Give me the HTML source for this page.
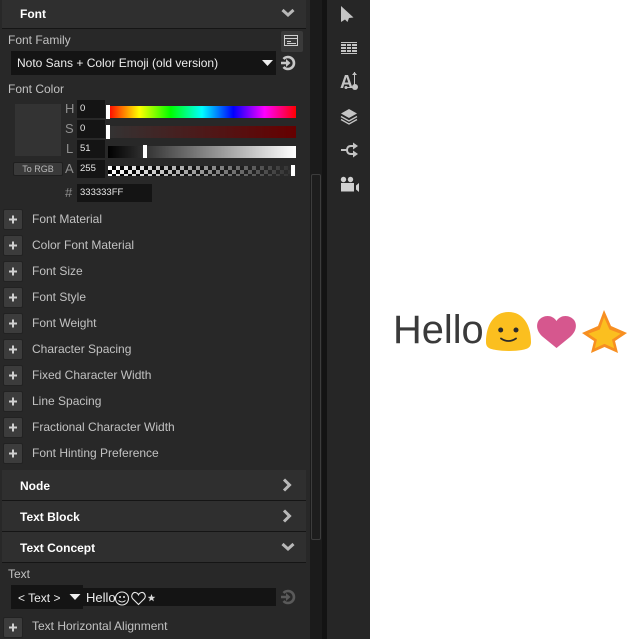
<!DOCTYPE html>
<html><head><meta charset="utf-8">
<style>
html,body{margin:0;padding:0;background:#fff}
#r{position:relative;width:632px;height:639px;overflow:hidden;background:#fff;font-family:"Liberation Sans",sans-serif}
#r div,#r svg{position:absolute}
.t{color:#c2c2c2;font-size:12px;line-height:16px;white-space:nowrap}
.h{left:2px;width:304px;background:#2f2f2f;border-bottom:1px solid #151515;box-sizing:border-box}
.b{color:#fff;font-size:12px;font-weight:bold;left:20px;line-height:16px;white-space:nowrap}
.p{left:3px;width:20px;height:21px;background:#3c3c3c;border:1px solid #222;box-sizing:border-box;border-radius:2px}
.in{background:#141414}
.v{color:#e8e8e8;font-size:9.500px;line-height:12px;white-space:nowrap}
.l{color:#8f8f8f;font-size:13px;line-height:16px}
.th{width:4px;background:#fff}
</style></head><body>
<div id="r">
<div style="left:0;top:0;width:310px;height:639px;background:#282828"></div>
<div style="left:310px;top:0;width:12px;height:639px;background:#1b1b1b"></div>
<div style="left:322px;top:0;width:5px;height:639px;background:#131313"></div>
<div style="left:327px;top:0;width:43px;height:639px;background:#262626"></div>
<div style="left:311px;top:174px;width:10px;height:366px;box-sizing:border-box;border:1px solid #3c3c3c;border-radius:2px;background:#1d1d1d"></div>

<div class="h" style="top:0;height:29px"></div>
<div class="b" style="top:6px">Font</div>
<svg style="left:281px;top:8px" width="14" height="10" viewBox="0 0 14 10"><path d="M1.500 2L7 7l5.500-5" fill="none" stroke="#b8b8b8" stroke-width="3"/></svg>

<div class="t" style="left:8px;top:32px">Font Family</div>
<div style="left:281px;top:31px;width:22px;height:21px;background:#3a3a3a;border-radius:2px"></div>
<svg style="left:284px;top:34px" width="16" height="14" viewBox="0 0 16 14"><rect x=".5" y="1.500" width="13" height="10" fill="none" stroke="#d0d0d0"/><path d="M1 4.500h12M3 7.500h4M3 9.500h9" stroke="#d0d0d0" fill="none"/></svg>
<div class="in" style="left:11px;top:51px;width:265px;height:24px"></div>
<div class="t" style="left:17px;top:55px;color:#ededed;font-size:12px">Noto Sans + Color Emoji (old version)</div>
<svg style="left:261px;top:59px" width="13" height="8" viewBox="0 0 13 8"><path d="M1 1h11L6.500 7z" fill="#eee"/></svg>
<svg style="left:280px;top:55px" width="16" height="16" viewBox="0 0 16 16"><path d="M3.500 4A6 6 0 1 1 3.500 12" fill="none" stroke="#c8c8c8" stroke-width="2.600"/><path d="M1 6.700h5V4l4.500 4-4.500 4V9.300H1z" fill="#c8c8c8"/></svg>

<div class="t" style="left:8px;top:81px">Font Color</div>
<div style="left:15px;top:104px;width:46px;height:52px;background:#333"></div>
<div style="left:13px;top:162px;width:50px;height:14px;background:#3a3a3a;border:1px solid #1f1f1f;box-sizing:border-box;border-radius:2px"></div>
<div class="v" style="left:13px;top:163px;width:50px;text-align:center;color:#b8b8b8;font-size:9px">To RGB</div>

<div class="l" style="left:65px;top:101px">H</div>
<div class="l" style="left:65px;top:121px">S</div>
<div class="l" style="left:66px;top:141px">L</div>
<div class="l" style="left:65px;top:161px">A</div>
<div class="l" style="left:65px;top:185px">#</div>

<div class="in" style="left:77px;top:100px;width:28px;height:18px"></div>
<div class="in" style="left:77px;top:120px;width:28px;height:18px"></div>
<div class="in" style="left:77px;top:140px;width:28px;height:18px"></div>
<div class="in" style="left:77px;top:160px;width:28px;height:18px"></div>
<div class="in" style="left:77px;top:184px;width:75px;height:18px"></div>
<div class="v" style="left:80px;top:103px">0</div>
<div class="v" style="left:80px;top:123px">0</div>
<div class="v" style="left:80px;top:143px">51</div>
<div class="v" style="left:80px;top:163px">255</div>
<div class="v" style="left:80px;top:187px">333333FF</div>

<div style="left:108px;top:106px;width:188px;height:12px;background:linear-gradient(90deg,#f00,#ff0 16.66%,#0f0 33.33%,#0ff 50%,#00f 66.66%,#f0f 83.33%,#f00)"></div>
<div style="left:108px;top:126px;width:188px;height:12px;background:linear-gradient(90deg,#333,#660000)"></div>
<div style="left:108px;top:146px;width:188px;height:12px;background:linear-gradient(90deg,#000,#fff)"></div>
<div style="left:108px;top:166px;width:188px;height:10px;background-color:#fff;background-image:linear-gradient(90deg,rgba(40,40,40,0),#2c2c2c),conic-gradient(#000 25%,#fff 0 50%,#000 0 75%,#fff 0);background-size:100% 100%,8px 8px"></div>
<div class="th" style="left:106px;top:105px;height:14px"></div>
<div class="th" style="left:106px;top:125px;height:14px"></div>
<div class="th" style="left:143px;top:145px;height:13px"></div>
<div class="th" style="left:291px;top:165px;height:11px"></div>

<div class="p" style="top:209px"></div><div class="t" style="left:32px;top:211px">Font Material</div>
<div class="p" style="top:235px"></div><div class="t" style="left:32px;top:237px">Color Font Material</div>
<div class="p" style="top:261px"></div><div class="t" style="left:32px;top:263px">Font Size</div>
<div class="p" style="top:287px"></div><div class="t" style="left:32px;top:289px">Font Style</div>
<div class="p" style="top:313px"></div><div class="t" style="left:32px;top:315px">Font Weight</div>
<div class="p" style="top:339px"></div><div class="t" style="left:32px;top:341px">Character Spacing</div>
<div class="p" style="top:365px"></div><div class="t" style="left:32px;top:367px">Fixed Character Width</div>
<div class="p" style="top:391px"></div><div class="t" style="left:32px;top:393px">Line Spacing</div>
<div class="p" style="top:417px"></div><div class="t" style="left:32px;top:419px">Fractional Character Width</div>
<div class="p" style="top:443px"></div><div class="t" style="left:32px;top:445px">Font Hinting Preference</div>
<div class="p" style="top:617px"></div><div class="t" style="left:32px;top:618px">Text Horizontal Alignment</div>
<svg style="left:0;top:0" width="30" height="639" viewBox="0 0 30 639"><path d="M13 215.500v8M9 219.500h8M13 241.500v8M9 245.500h8M13 267.500v8M9 271.500h8M13 293.500v8M9 297.500h8M13 319.500v8M9 323.500h8M13 345.500v8M9 349.500h8M13 371.500v8M9 375.500h8M13 397.500v8M9 401.500h8M13 423.500v8M9 427.500h8M13 449.500v8M9 453.500h8M13 623.500v8M9 627.500h8" stroke="#d0d0d0" stroke-width="2" fill="none"/></svg>

<div class="h" style="top:470px;height:31px"></div><div class="b" style="top:478px">Node</div>
<div class="h" style="top:501px;height:31px"></div><div class="b" style="top:509px">Text Block</div>
<div class="h" style="top:532px;height:31px"></div><div class="b" style="top:540px">Text Concept</div>
<svg style="left:282px;top:478px" width="10" height="14" viewBox="0 0 10 14"><path d="M2 1.500L7.500 7 2 12.500" fill="none" stroke="#b8b8b8" stroke-width="3"/></svg>
<svg style="left:282px;top:509px" width="10" height="14" viewBox="0 0 10 14"><path d="M2 1.500L7.500 7 2 12.500" fill="none" stroke="#b8b8b8" stroke-width="3"/></svg>
<svg style="left:281px;top:542px" width="14" height="10" viewBox="0 0 14 10"><path d="M1.500 2L7 7l5.500-5" fill="none" stroke="#b8b8b8" stroke-width="3"/></svg>

<div class="t" style="left:8px;top:566px">Text</div>
<div class="in" style="left:83px;top:588px;width:193px;height:18px"></div>
<div class="in" style="left:11px;top:585px;width:72px;height:24px"></div>
<div class="t" style="left:18px;top:590px;color:#ededed">&lt; Text &gt;</div>
<svg style="left:69px;top:593px" width="12" height="8" viewBox="0 0 12 8"><path d="M.5 1h11L6 7z" fill="#eee"/></svg>
<div class="t" style="left:86px;top:590px;color:#ededed;font-size:13px">Hello</div>
<svg style="left:114px;top:590px" width="42" height="18" viewBox="0 0 42 18"><circle cx="8" cy="8.500" r="6.500" fill="none" stroke="#e8e8e8" stroke-width="1.100"/><circle cx="6" cy="7" r="1" fill="#e8e8e8"/><circle cx="10" cy="7" r="1" fill="#e8e8e8"/><path d="M4.500 10.500q3.500 3 7 0" fill="none" stroke="#e8e8e8"/><path d="M24.500 14.500l-6-6c-2-3 .5-6.500 3-6 1.500.3 2.500 1.200 3 2.300.5-1.100 1.500-2 3-2.300 2.500-.5 5 3 3 6z" fill="none" stroke="#e8e8e8" stroke-width="1.100"/><path d="M37.500 4l1 2.800 2.800.1-2.200 1.700.8 2.800-2.400-1.600-2.400 1.600.8-2.800-2.200-1.700 2.800-.1z" fill="#d8d8d8"/></svg>
<svg style="left:280px;top:589px" width="16" height="16" viewBox="0 0 16 16"><path d="M3.500 4A6 6 0 1 1 3.500 12" fill="none" stroke="#5a5a5a" stroke-width="2.600"/><path d="M1 6.700h5V4l4.500 4-4.500 4V9.300H1z" fill="#5a5a5a"/></svg>

<svg style="left:335px;top:0" width="30" height="200" viewBox="0 0 30 200">
<path d="M6 6L18.500 17.500 14 18 12.500 22 10 19.500 6 22z" fill="#c4c4c4"/>
<path d="M6 42.500h16M6 53.500h16" stroke="#c4c4c4" stroke-width="1" fill="none"/>
<path d="M6 44h16v8H6z" fill="#c4c4c4"/>
<path d="M6 46.500h16M6 49.500h16M11.500 44v8M16.500 44v8" stroke="#262626" fill="none"/>
<text x="5" y="88" font-family="Liberation Sans" font-weight="bold" font-size="18" fill="#c4c4c4">A</text>
<path d="M19.500 72v16M10 87.500h9" stroke="#c4c4c4" fill="none"/><path d="M17 75l2.500-3 2.500 3z" fill="#c4c4c4"/>
<circle cx="20" cy="87" r="3" fill="#c4c4c4"/><circle cx="11" cy="87.500" r="1.500" fill="#c4c4c4"/>
<path d="M14 109l8 4.500-8 4.500-8-4.500z" fill="#c4c4c4"/>
<path d="M6 116.500l8 4.500 8-4.500M6 119.500l8 4.500 8-4.500" fill="none" stroke="#c4c4c4" stroke-width="1.300"/>
<path d="M6 150h6" stroke="#c4c4c4" stroke-width="2" fill="none"/>
<path d="M19 146h-3c-3 0-4 2-4 4s1 4 4 4h3" stroke="#c4c4c4" stroke-width="2" fill="none"/>
<path d="M18 142.500l5 3.500-5 3.500zM18 150.500l5 3.500-5 3.500z" fill="#c4c4c4"/>
<circle cx="8.500" cy="179.500" r="2.700" fill="#d0d0d0"/><circle cx="15.500" cy="179.500" r="2.700" fill="#d0d0d0"/>
<rect x="6" y="183" width="13" height="8.500" fill="#d0d0d0"/><path d="M24 183v9l-3-2.500v-4z" fill="#d0d0d0"/>
</svg>

<div style="left:393px;top:307px;font-size:39.800px;line-height:46px;color:#3a3a3a;white-space:nowrap">Hello</div>
<svg style="left:484px;top:308px" width="146" height="50" viewBox="0 0 146 50">
<path d="M2 34C2 17 10 4 24.500 4S47 17 47 34c0 6-4 7-9 8-7 1.300-19 1.300-26 0C6 41 2 40 2 34z" fill="#fbbf1f"/>
<circle cx="16.700" cy="22" r="2.500" fill="#2b2b2b"/><circle cx="32" cy="22" r="2.500" fill="#2b2b2b"/>
<path d="M17 30.500q7.500 5 15 0" fill="none" stroke="#2b2b2b" stroke-width="1.800" stroke-linecap="round"/>
<path d="M72.500 40L59 29C52 23 52 16 55 12c4-5 13-6 17.500 1C77 6 86 7 90 12c3 4 3 11-4 17z" fill="#d6578e"/>
<path d="M120 2L127 18 143 25 131 33 134 45 120.500 39 107 45 110 33 98 25 114 18z" fill="#f78f21"/>
<path d="M120.100 9.300L125.500 21.500 136.700 25.800 128 31.600 130.200 40.200 120.500 35.900 110.800 40.200 112.900 31.600 104.300 25.800 115.800 21.500z" fill="#fbbf1f"/>
</svg>
</div>
</body></html>
